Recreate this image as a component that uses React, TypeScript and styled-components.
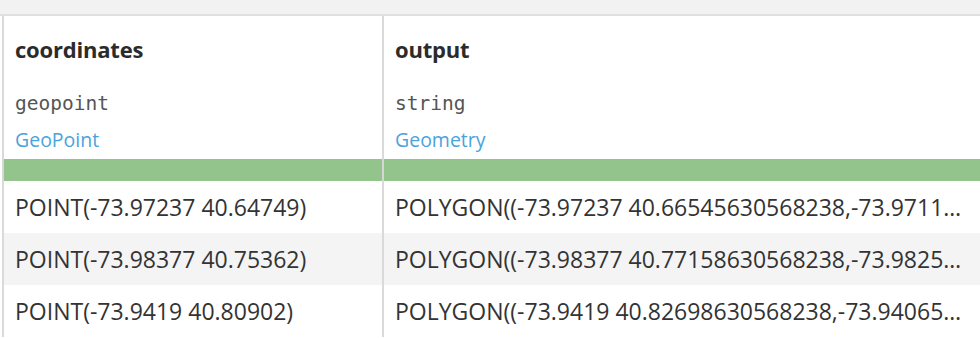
import React from 'react';
import styled, { createGlobalStyle } from 'styled-components';

const GlobalStyle = createGlobalStyle`
  * {
    box-sizing: border-box;
  }

  body {
    margin: 0;
    background: #fff;
    font-family: 'Open Sans', 'Noto Sans', sans-serif;
    color: #333;
    overflow: hidden;
  }
`;

const TopStrip = styled.div`
  height: 16px;
  background: #f2f2f2;
  border-bottom: 2px solid #e0e0e0;
`;

const Table = styled.div`
  display: grid;
  grid-template-columns: 380px 598px;
  margin-left: 2px;
`;

const HeaderCell = styled.div`
  display: flex;
  flex-direction: column;
  height: 143px;
  padding: 18px 11px 0;
  border-left: 2px solid #dadada;
`;

const ColumnName = styled.div`
  font-size: 22px;
  font-weight: 700;
  line-height: 30px;
  color: #2b2b2b;
  letter-spacing: -0.2px;
`;

const StorageType = styled.div`
  margin-top: 26px;
  font-family: 'DejaVu Sans Mono', 'Liberation Mono', monospace;
  font-size: 19.5px;
  line-height: 28px;
  color: #555;
`;

const Meaning = styled.div`
  margin-top: 9px;
  font-size: 19.5px;
  line-height: 26px;
  color: #4aa3dc;
`;

const QualityBar = styled.div`
  height: 22px;
  background: #92c48b;
  border-left: 2px solid #d6d6d6;
`;

// last column keeps a wider right padding so the ellipsis lands where the reference cuts
const Cell = styled.div<{ $odd: boolean; $last: boolean }>`
  height: 52px;
  display: flex;
  align-items: center;
  padding: ${({ $last }) => ($last ? '0 15px 0 11px' : '0 11px')};
  border-left: 2px solid #dadada;
  background: ${({ $odd }) => ($odd ? '#f4f4f4' : '#fff')};
  font-size: 23px;
  color: #333;
  min-width: 0;

  span {
    display: block;
    white-space: nowrap;
    overflow: hidden;
    text-overflow: ellipsis;
    width: 100%;
  }
`;

const columns = [
  { name: 'coordinates', type: 'geopoint', meaning: 'GeoPoint' },
  { name: 'output', type: 'string', meaning: 'Geometry' },
];

const rows = [
  [
    'POINT(-73.97237 40.64749)',
    'POLYGON((-73.97237 40.66545630568238,-73.97115762158953 40.66542042815466,-73.96996524693206 40.66531310549651))',
  ],
  [
    'POINT(-73.98377 40.75362)',
    'POLYGON((-73.98377 40.77158630568238,-73.98255612432712 40.77155042815466,-73.98136117208839 40.77144310549651))',
  ],
  [
    'POINT(-73.9419 40.80902)',
    'POLYGON((-73.9419 40.82698630568238,-73.94065506744154 40.82695042815466,-73.93948898301352 40.82684310549651))',
  ],
];

const App = () => {
  return (
    <div>
      <GlobalStyle />
      <TopStrip />
      <Table>
        {columns.map((col) => (
          <HeaderCell key={col.name}>
            <ColumnName>{col.name}</ColumnName>
            <StorageType>{col.type}</StorageType>
            <Meaning>{col.meaning}</Meaning>
          </HeaderCell>
        ))}
        {columns.map((col) => (
          <QualityBar key={col.name} />
        ))}
        {rows.map((row, i) =>
          row.map((value, j) => (
            <Cell key={`${i}-${j}`} $odd={i % 2 === 1} $last={j === row.length - 1}>
              <span>{value}</span>
            </Cell>
          ))
        )}
      </Table>
    </div>
  );
};

export default App;
